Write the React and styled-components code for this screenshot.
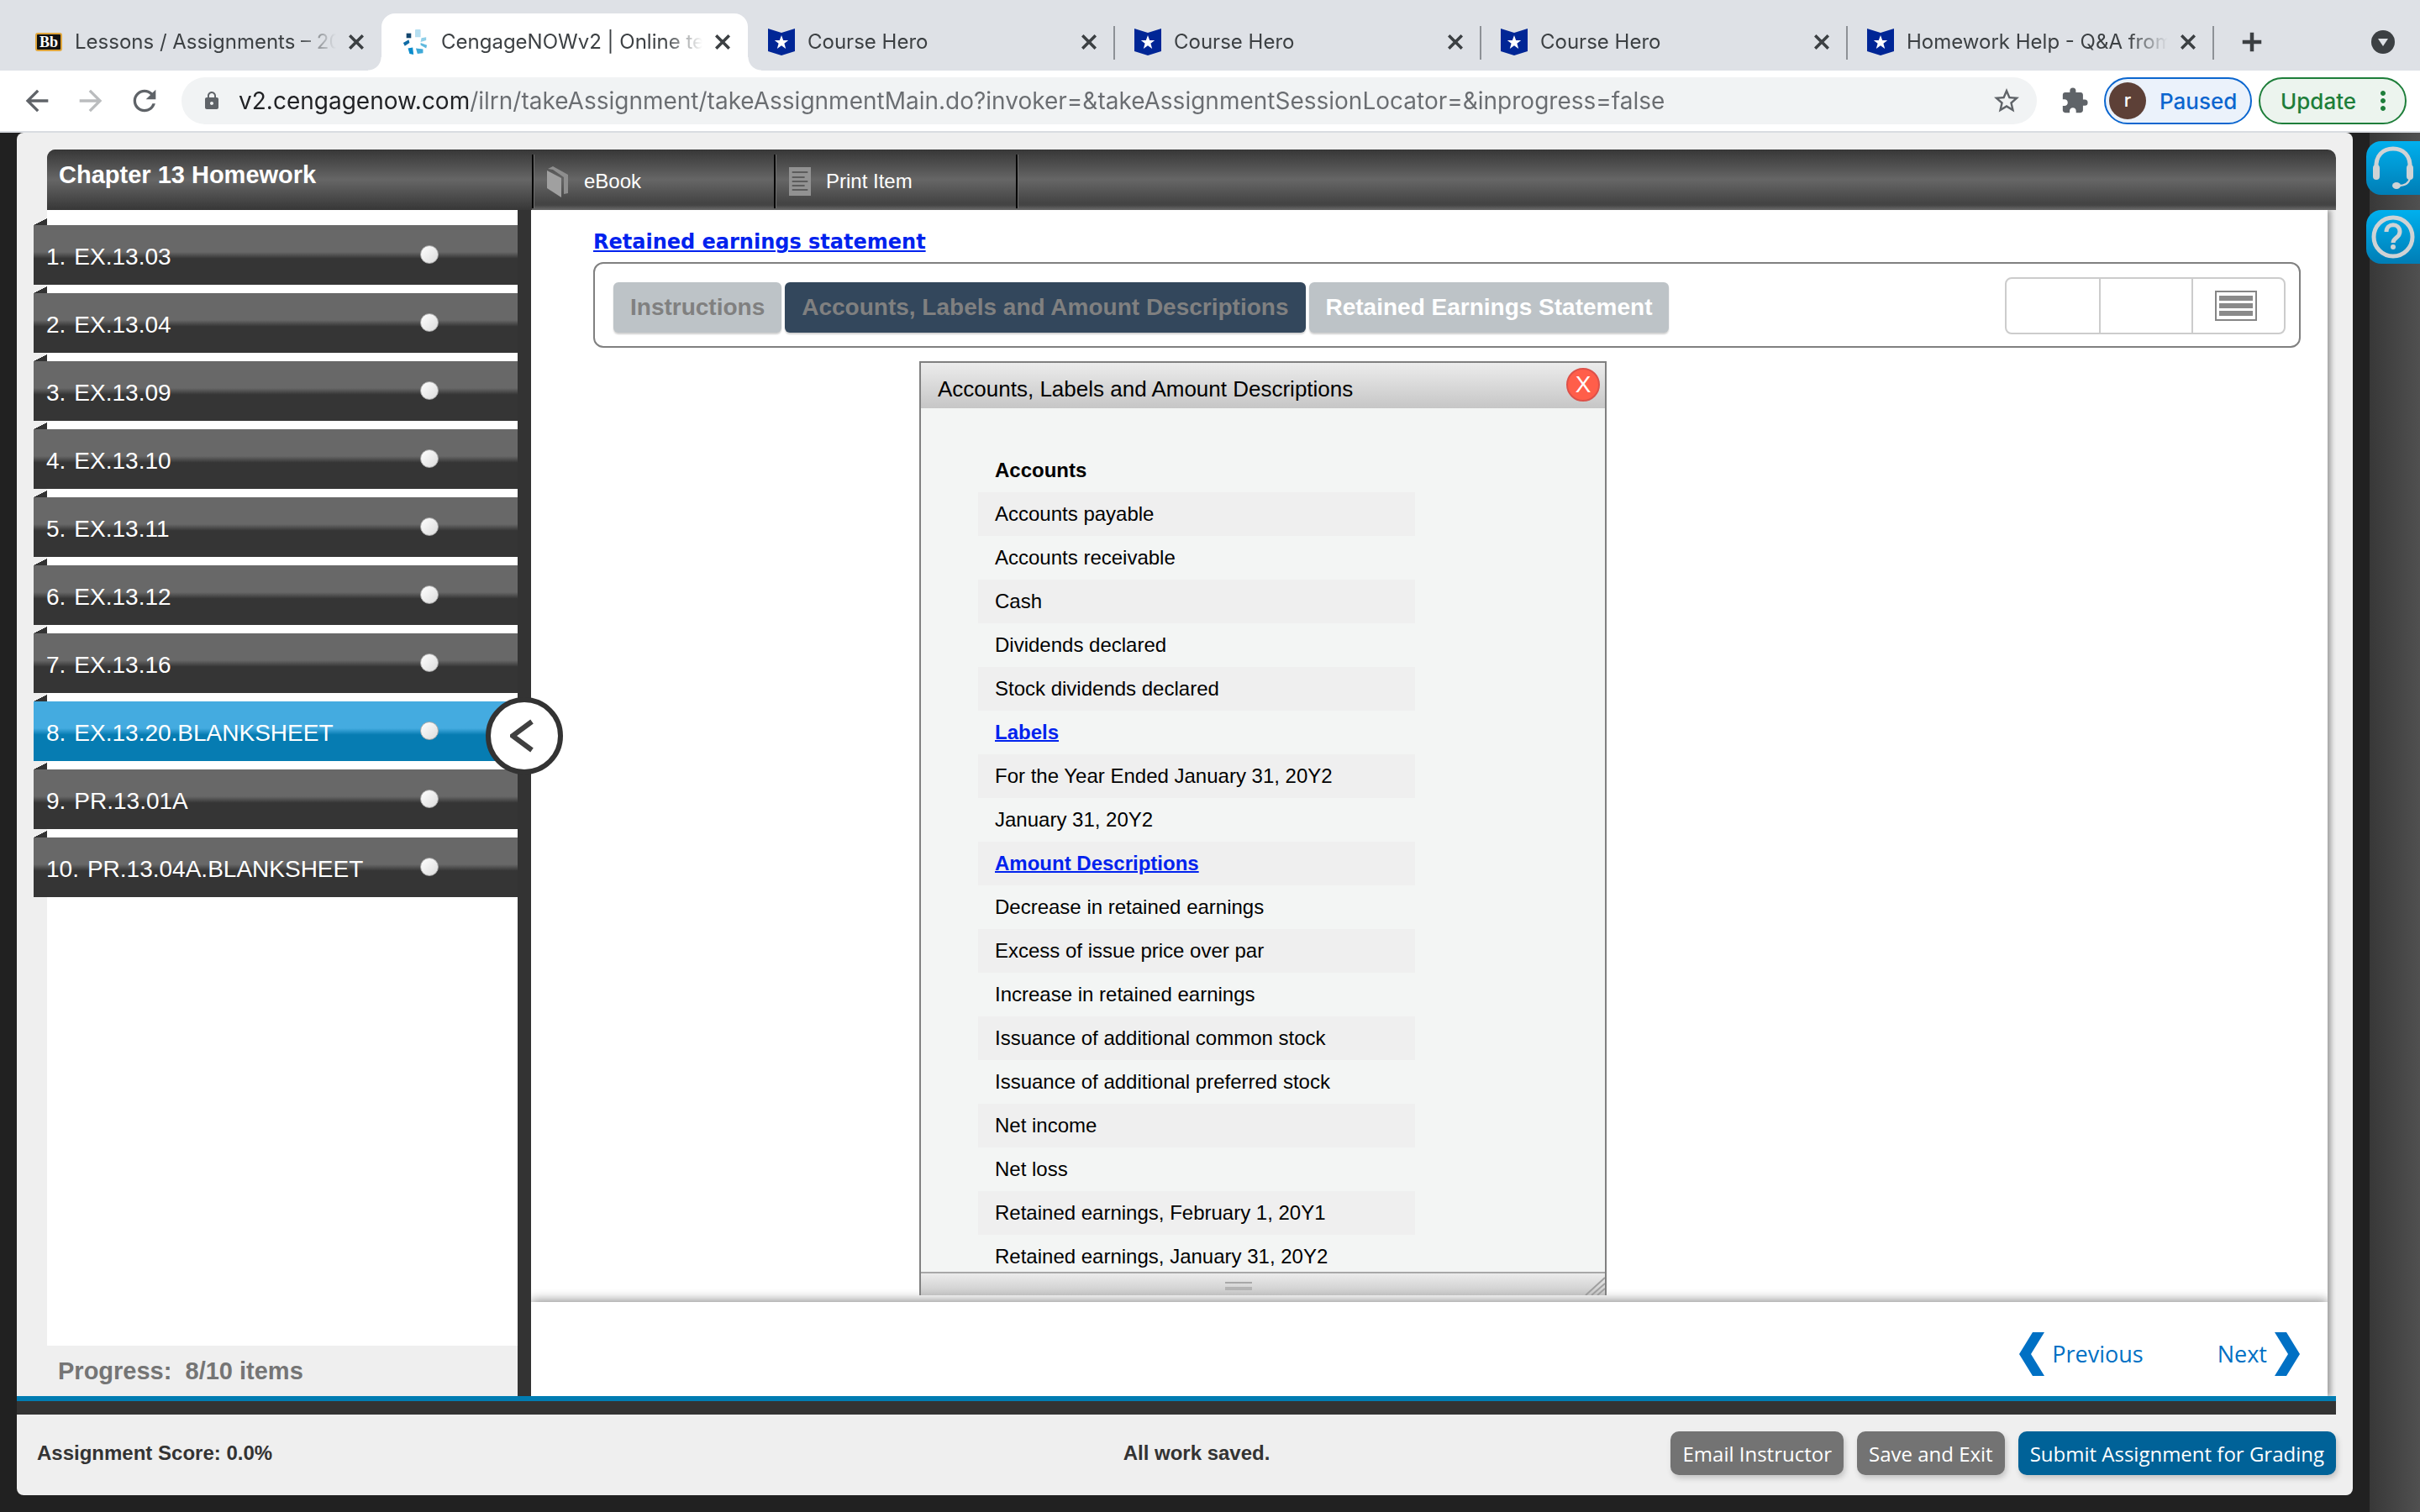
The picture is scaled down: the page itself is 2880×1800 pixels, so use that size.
import React from 'react';
import styled, { createGlobalStyle, css } from 'styled-components';
import {
    MdArrowBack,
    MdArrowForward,
    MdRefresh,
    MdLock,
    MdStarBorder,
    MdExtension,
    MdMoreVert,
    MdClose,
    MdAdd
} from 'react-icons/md';

const GlobalStyle = createGlobalStyle`
    * {
        box-sizing: border-box;
    }
    body {
        margin: 0;
        background: #212121;
        font-family: "Liberation Sans", Arial, sans-serif;
    }
    button {
        font-family: inherit;
        border: none;
        background: none;
        padding: 0;
        cursor: pointer;
    }
`;

const Page = styled.div`
    height: 100vh;
    display: flex;
    flex-direction: column;
    overflow: hidden;
`;

/* ---------- browser chrome ---------- */

const TabStrip = styled.div`
    height: 84px;
    padding: 16px 30px 0 18px;
    display: flex;
    background: #dee1e6;
    font-family: Inter, sans-serif;
    color: #3c4043;
`;
const Tab = styled.div`
    flex: 0 1 436px;
    min-width: 0;
    height: 68px;
    padding: 0 16px 0 24px;
    display: flex;
    align-items: center;
    position: relative;
    ${({ $active }) => $active && css`
        background: #ffffff;
        border-radius: 16px 16px 0 0;
        &::before,
        &::after {
            content: "";
            position: absolute;
            bottom: 0;
            width: 16px;
            height: 16px;
        }
        &::before {
            left: -16px;
            background: radial-gradient(circle at 0 0, transparent 15px, #ffffff 16px);
        }
        &::after {
            right: -16px;
            background: radial-gradient(circle at 100% 0, transparent 15px, #ffffff 16px);
        }
    `}
    ${({ $divided }) => $divided && css`
        &::after {
            content: "";
            position: absolute;
            right: -1px;
            top: 15px;
            width: 2px;
            height: 40px;
            background: #8d9196;
        }
    `}
`;
const TabLabel = styled.span`
    flex: 1;
    min-width: 0;
    margin: 0 4px 0 15px;
    overflow: hidden;
    white-space: nowrap;
    font-size: 24px;
    line-height: 32px;
    mask-image: linear-gradient(90deg, #000 calc(100% - 52px), transparent calc(100% - 6px));
`;
const TabButton = styled.button`
    display: flex;
    color: #3c4043;
    font-size: 28px;
    & path:last-child {
        stroke: currentColor;
        stroke-width: 1px;
    }
    & path[fill="none"] {
        stroke: none;
    }
`;
const NewTab = styled(TabButton)`
    font-size: 36px;
    align-items: center;
    padding: 0 28px;
`;
const TabSearch = styled(TabButton)`
    margin-left: auto;
    align-items: center;
`;
const BbIcon = styled.span`
    width: 32px;
    height: 22px;
    border: 2px solid #e0a63c;
    border-radius: 3px;
    background: #111111;
    color: #ffffff;
    font-family: "Liberation Serif", serif;
    font-size: 18px;
    line-height: 18px;
    font-weight: 700;
    text-align: center;
`;

const Toolbar = styled.div`
    height: 74px;
    padding: 0 16px 0 24px;
    display: flex;
    align-items: center;
    background: #ffffff;
    border-bottom: 2px solid #d9dce1;
    color: #5f6368;
    font-family: Inter, sans-serif;
`;
const NavButton = styled.button`
    display: flex;
    margin-right: 24px;
    font-size: 40px;
    color: ${({ disabled }) => (disabled ? '#babcbe' : '#5f6368')};
`;
const AddressBar = styled.div`
    flex: 1;
    height: 56px;
    padding: 0 18px 0 24px;
    display: flex;
    align-items: center;
    background: #f1f3f4;
    border-radius: 28px;
    font-size: 24px;
`;
const Address = styled.input`
    flex: 1;
    min-width: 0;
    height: 40px;
    margin: 0 16px 0 20px;
    padding: 0;
    border: none;
    outline: none;
    font-family: Inter, sans-serif;
    font-size: 28px;
    color: transparent;
    background: linear-gradient(90deg, #202124 274px, #6a6d71 274px);
    background-clip: text;
    -webkit-background-clip: text;
`;
const IconButton = styled.button`
    display: flex;
    font-size: 36px;
    color: #5f6368;
`;
const ExtensionButton = styled(IconButton)`
    margin: 0 18px 0 28px;
    font-size: 34px;
`;
const Pill = styled.button`
    height: 56px;
    display: flex;
    align-items: center;
    border: 2px solid ${({ $color }) => $color};
    border-radius: 28px;
    background: ${({ $fill }) => $fill};
    color: ${({ $color }) => $color};
    font-size: 26px;
    font-weight: 500;
`;
const PausedPill = styled(Pill)`
    width: 176px;
    padding-left: 4px;
    gap: 16px;
`;
const UpdatePill = styled(Pill)`
    width: 176px;
    margin-left: 8px;
    padding: 0 8px 0 24px;
    justify-content: space-between;
    & svg {
        font-size: 36px;
    }
`;
const Avatar = styled.span`
    width: 44px;
    height: 44px;
    border-radius: 50%;
    background: #5d4037;
    color: #ffffff;
    font-size: 22px;
    line-height: 42px;
    text-align: center;
`;

/* ---------- assignment shell ---------- */

const Workspace = styled.div`
    flex: 1;
    min-height: 0;
    display: flex;
    background: #212121;
`;
const Shell = styled.div`
    flex: 1;
    min-width: 0;
    margin: 0 20px 20px;
    display: flex;
    flex-direction: column;
    background: #efefef;
    border-radius: 8px;
`;
const TitleBar = styled.header`
    height: 72px;
    margin: 20px 20px 0 36px;
    display: flex;
    color: #ffffff;
    border-radius: 10px 10px 0 0;
    background: linear-gradient(180deg, #373737 0%, #666666 50%, #444444 88%, #444444 92%, #6a6a6a 100%);
`;
const Title = styled.h1`
    width: 577px;
    margin: 0;
    padding: 14px 0 0 14px;
    font-size: 29px;
    line-height: 32px;
    font-weight: 700;
    border-radius: 10px 0 0 0;
    background: linear-gradient(180deg, #373737 0%, #666666 50%, #373737 100%);
`;
const TitleButton = styled.button`
    width: 288px;
    height: 64px;
    margin-top: 6px;
    padding: 0 0 0 16px;
    display: flex;
    align-items: center;
    gap: 18px;
    border-left: 2px solid #000000;
    box-shadow: inset 1px 0 0 #707070;
    color: #ffffff;
    font-size: 24px;
`;
const TitleEnd = styled.span`
    height: 64px;
    margin-top: 6px;
    border-left: 2px solid #000000;
    border-right: 1px solid #707070;
`;

const Columns = styled.div`
    flex: 1;
    min-height: 0;
    display: flex;
    margin-right: 30px;
`;
const Sidebar = styled.nav`
    width: 612px;
    display: flex;
    flex-direction: column;
    border-right: 16px solid #333333;
    position: relative;
`;
const ItemArea = styled.div`
    flex: 1;
    margin-left: 36px;
    background: #ffffff;
`;
const ItemList = styled.ol`
    margin: 0 0 0 -16px;
    padding: 18px 0 0;
    list-style: none;
    display: flex;
    flex-direction: column;
    gap: 10px;
`;
const Item = styled.li`
    position: relative;
    &::before {
        content: "";
        position: absolute;
        left: 0;
        top: -8px;
        width: 16px;
        height: 8px;
        background: linear-gradient(to bottom right, #efefef 50%, #333333 50%);
    }
`;
const ItemButton = styled.button`
    width: 100%;
    height: 71px;
    padding: 4px 94px 0 15px;
    display: flex;
    align-items: center;
    gap: 10px;
    color: #ffffff;
    font-size: 28px;
    line-height: 32px;
    background: ${({ $current }) => ($current
        ? 'linear-gradient(180deg, #44abe0 45%, #067cb2 56%)'
        : 'linear-gradient(180deg, #686868 45%, #353535 56%)')};
`;
const StatusDot = styled.span`
    width: 22px;
    height: 22px;
    margin: 0 0 6px auto;
    border-radius: 50%;
    background: linear-gradient(135deg, #ffffff, #dcdcdc);
    border: 1px solid #a8a8a8;
`;
const Collapse = styled.button`
    position: absolute;
    right: -54px;
    top: 580px;
    z-index: 3;
    width: 92px;
    height: 92px;
    display: flex;
    align-items: center;
    justify-content: center;
    border: 6px solid #333333;
    border-radius: 50%;
    background: #ffffff;
`;
const Progress = styled.p`
    height: 60px;
    margin: 0;
    padding-left: 49px;
    color: #757575;
    font-size: 29px;
    line-height: 60px;
    font-weight: 700;
    white-space: pre;
`;

const Main = styled.main`
    flex: 1;
    min-width: 0;
    display: flex;
    flex-direction: column;
    background: #ffffff;
    box-shadow: 4px 0 6px #a0a0a0;
    clip-path: inset(0 -10px 0 0);
`;
const Content = styled.section`
    flex: 1;
    min-height: 0;
    padding: 22px 32px 8px 74px;
    display: flex;
    flex-direction: column;
    align-items: flex-start;
`;
const StatementLink = styled.a`
    color: #0022ee;
    font-family: "DejaVu Sans", Verdana, sans-serif;
    font-size: 24px;
    line-height: 32px;
    font-weight: 700;
    text-decoration-thickness: 2px;
    text-underline-offset: 2px;
`;
const SheetBar = styled.div`
    align-self: stretch;
    height: 102px;
    margin-top: 8px;
    padding: 0 16px 0 22px;
    display: flex;
    align-items: center;
    gap: 4px;
    border: 2px solid #808080;
    border-radius: 12px;
`;
const SheetButton = styled.button`
    height: 60px;
    margin-top: 6px;
    padding: 0 20px;
    border-radius: 6px;
    font-size: 28px;
    font-weight: 700;
    color: ${({ $dim }) => ($dim ? '#808080' : '#ffffff')};
    background: ${({ $current }) => ($current ? '#33475c' : '#bdc3c7')};
    box-shadow: 0 2px 2px #d0d0d0;
`;
const ViewGroup = styled.div`
    height: 68px;
    margin: 2px 0 0 auto;
    display: flex;
    border: 2px solid #cccccc;
    border-radius: 8px;
`;
const ViewButton = styled.button`
    width: 110px;
    padding-right: 6px;
    display: flex;
    align-items: center;
    justify-content: center;
    & + & {
        border-left: 2px solid #cccccc;
    }
`;

const Panel = styled.section`
    flex: 1;
    min-height: 0;
    width: 818px;
    margin: 16px 0 0 388px;
    display: flex;
    flex-direction: column;
    border: 2px solid #808080;
    border-bottom: none;
    background: #f3f5f4;
`;
const PanelHeader = styled.header`
    height: 54px;
    padding: 0 6px 0 20px;
    display: flex;
    align-items: center;
    justify-content: space-between;
    background: linear-gradient(180deg, #ececec, #c6c6c6);
`;
const PanelTitle = styled.h2`
    margin: 8px 0 0;
    font-size: 26px;
    line-height: 32px;
    font-weight: 400;
`;
const CloseButton = styled.button`
    width: 40px;
    height: 40px;
    margin-bottom: 2px;
    border: 2px solid #dd5149;
    border-radius: 50%;
    background: #ff5e4a;
    color: #ffffff;
    font-size: 28px;
    line-height: 36px;
`;
const PanelBody = styled.div`
    flex: 1;
    min-height: 0;
    overflow: hidden;
    padding: 48px 0 0 68px;
`;
const AccountList = styled.ul`
    width: 520px;
    margin: 0;
    padding: 0;
    list-style: none;
`;
const AccountRow = styled.li`
    height: 52px;
    padding-left: 20px;
    font-size: 24px;
    line-height: 52px;
    font-weight: ${({ $heading }) => ($heading ? 700 : 400)};
    &:nth-child(even) {
        background: #efefef;
    }
    & a {
        color: #0022ee;
        text-decoration-thickness: 2px;
    }
`;
const PanelFooter = styled.footer`
    height: 28px;
    display: flex;
    justify-content: flex-end;
    border-top: 2px solid #a8a8a8;
    background: linear-gradient(180deg, #ececec, #c9c9c9);
`;
const Grip = styled.span`
    width: 32px;
    height: 10px;
    margin: 10px auto 0 362px;
    border-top: 2px solid #a8a8a8;
    border-bottom: 4px solid #b4b4b4;
`;

const Pager = styled.nav`
    height: 112px;
    padding: 12px 33px 0;
    display: flex;
    align-items: center;
    justify-content: flex-end;
    gap: 88px;
    background: #ffffff;
    box-shadow: 0 -2px 12px #8c8c8c;
    clip-path: inset(-16px 0 0 0);
    z-index: 1;
`;
const PagerLink = styled.a`
    display: flex;
    align-items: center;
    gap: 9px;
    color: #0070c4;
    font-family: "Open Sans", sans-serif;
    font-size: 27px;
    line-height: 40px;
    text-decoration: none;
`;

const BaseRule = styled.div`
    height: 22px;
    margin-right: 20px;
    background: #333333;
    border-top: 6px solid #007cb2;
`;
const StatusBar = styled.footer`
    height: 96px;
    padding: 0 20px 0 24px;
    display: grid;
    grid-template-columns: 1fr auto 1fr;
    align-items: center;
    color: #333333;
    font-size: 24px;
    line-height: 28px;
    font-weight: 700;
`;
const Score = styled.span`
    margin-bottom: 4px;
`;
const SaveState = styled(Score)`
    padding-left: 24px;
`;
const Actions = styled.div`
    display: flex;
    justify-content: flex-end;
    gap: 16px;
`;
const ActionButton = styled.button`
    height: 52px;
    margin-bottom: 4px;
    padding: 0 14px;
    border-radius: 10px;
    background: ${({ $primary }) => ($primary ? '#006298' : '#737373')};
    box-shadow: 2px 4px 6px #c4c4c4;
    color: #ffffff;
    font-family: "Open Sans", sans-serif;
    font-size: 24px;
    white-space: nowrap;
`;

const SideRail = styled.aside`
    width: 60px;
    padding-top: 10px;
    display: flex;
    flex-direction: column;
    align-items: flex-end;
    gap: 18px;
    background: linear-gradient(90deg, #383838, #505050);
`;
const HelpButton = styled.button`
    width: 64px;
    height: 64px;
    display: flex;
    align-items: center;
    justify-content: center;
    border-radius: 18px 0 0 18px;
    background: linear-gradient(180deg, #00b0ee, #007db5);
`;

/* ---------- icons ---------- */

const CengageIcon = () => (
    <svg width="32" height="34" viewBox="0 0 34 34">
        <rect x="17" y="1" width="7" height="10" rx="1" fill="#b5def0" />
        <path d="M25 12l6-1v4l-7 2z" fill="#8fcfe8" />
        <path d="M24 18l8 3-1 4-7-4z" fill="#5fb9de" />
        <path d="M18 25l9 1v5l-7 1z" fill="#3ea9d8" />
        <path d="M8 25l6-1 1 9-5-1z" fill="#0a8ccc" />
        <path d="M2 18l7-4 1 4-6 4z" fill="#0f6ba5" />
        <rect x="6" y="6" width="6" height="6" fill="#12466e" />
    </svg>
);

const HeroIcon = () => (
    <svg width="32" height="32" viewBox="0 0 32 32">
        <path d="M0 0l16 5L32 0v27l-16 5L0 27z" fill="#002696" />
        <path d="M16 8l2.200 6h6l-4.800 3.700 1.800 6.300-5.200-3.800-5.200 3.800 1.800-6.300L7.800 14h6z" fill="#fff" />
    </svg>
);

const TabSearchIcon = () => (
    <svg width="28" height="28" viewBox="0 0 28 28">
        <circle cx="14" cy="14" r="14" fill="#3c4043" />
        <polygon points="8,10 20,10 14,19" fill="#dee1e6" />
    </svg>
);

const BookIcon = () => (
    <svg width="26" height="38" viewBox="0 0 26 38">
        <path d="M0 6L17 15v23L0 27z" fill="#a0a0a0" />
        <path d="M1 4L7 1l18 10v22l-5 1V14L7 5z" fill="#8e8e8e" />
    </svg>
);

const PrintIcon = () => (
    <svg width="26" height="34" viewBox="0 0 28 34" preserveAspectRatio="none">
        <rect width="28" height="34" fill="#929292" />
        <path d="M4 6h20M4 12h16M4 17h20M4 22h16M4 27h20" stroke="#5c5c5c" strokeWidth="2" />
    </svg>
);

const ListIcon = () => (
    <svg width="50" height="36" viewBox="0 0 50 36">
        <rect x="1" y="1" width="48" height="34" fill="#fff" stroke="#858585" strokeWidth="2" />
        <path d="M5 9h40M5 18h40M5 27h40" stroke="#8a8a8a" strokeWidth="6" />
    </svg>
);

const ResizeIcon = () => (
    <svg width="24" height="26" viewBox="0 0 24 26">
        <path d="M1 26L24 5M8 26L24 12M15 26L24 18" stroke="#a0a0a0" strokeWidth="2" fill="none" />
    </svg>
);

const CollapseIcon = () => (
    <svg width="34" height="40" viewBox="0 0 34 40">
        <path d="M26 3L3 20l23 17" stroke="#404040" strokeWidth="6" fill="none" />
    </svg>
);

const PreviousIcon = () => (
    <svg width="30" height="52" viewBox="0 0 30 52">
        <path d="M30 0H16L0 26l16 26h14L14 26z" fill="#0070c4" />
    </svg>
);

const NextIcon = () => (
    <svg width="30" height="52" viewBox="0 0 30 52">
        <path d="M0 0h14l16 26-16 26H0l16-26z" fill="#0070c4" />
    </svg>
);

const HeadsetIcon = () => (
    <svg width="50" height="52" viewBox="0 0 50 52">
        <path d="M5 26C4 11 13 3 25 3s21 8 20 23" stroke="#cfd3d5" strokeWidth="5" fill="none" />
        <rect x="1" y="22" width="8" height="18" rx="4" fill="#cfd3d5" />
        <rect x="41" y="22" width="8" height="18" rx="4" fill="#cfd3d5" />
        <path d="M45 38c-1 6-6 9-14 9" stroke="#cfd3d5" strokeWidth="2" fill="none" />
        <ellipse cx="29" cy="47" rx="5" ry="4" fill="#cfd3d5" />
    </svg>
);

const QuestionIcon = () => (
    <svg width="52" height="52" viewBox="0 0 52 52" fill="none">
        <circle cx="26" cy="26" r="23" stroke="#cfd3d5" strokeWidth="5" />
        <path d="M18 20c0-11 16-11 16 0 0 7-8 7-8 13" stroke="#cfd3d5" strokeWidth="5" />
        <circle cx="26" cy="38" r="3" fill="#cfd3d5" />
    </svg>
);

/* ---------- data ---------- */

const tabs = [
    { label: 'Lessons / Assignments – 20', icon: <BbIcon>Bb</BbIcon> },
    { label: 'CengageNOWv2 | Online te', icon: <CengageIcon />, active: true },
    { label: 'Course Hero', icon: <HeroIcon />, divided: true },
    { label: 'Course Hero', icon: <HeroIcon />, divided: true },
    { label: 'Course Hero', icon: <HeroIcon />, divided: true },
    { label: 'Homework Help - Q&A from', icon: <HeroIcon />, divided: true }
];

const items = [
    'EX.13.03',
    'EX.13.04',
    'EX.13.09',
    'EX.13.10',
    'EX.13.11',
    'EX.13.12',
    'EX.13.16',
    'EX.13.20.BLANKSHEET',
    'PR.13.01A',
    'PR.13.04A.BLANKSHEET'
];

const accounts = [
    { text: 'Accounts', heading: true },
    { text: 'Accounts payable' },
    { text: 'Accounts receivable' },
    { text: 'Cash' },
    { text: 'Dividends declared' },
    { text: 'Stock dividends declared' },
    { text: 'Labels', heading: true, link: true },
    { text: 'For the Year Ended January 31, 20Y2' },
    { text: 'January 31, 20Y2' },
    { text: 'Amount Descriptions', heading: true, link: true },
    { text: 'Decrease in retained earnings' },
    { text: 'Excess of issue price over par' },
    { text: 'Increase in retained earnings' },
    { text: 'Issuance of additional common stock' },
    { text: 'Issuance of additional preferred stock' },
    { text: 'Net income' },
    { text: 'Net loss' },
    { text: 'Retained earnings, February 1, 20Y1' },
    { text: 'Retained earnings, January 31, 20Y2' }
];

const url = 'v2.cengagenow.com/ilrn/takeAssignment/takeAssignmentMain.do?invoker=&takeAssignmentSessionLocator=&inprogress=false';

const Browser = () => (
    <>
        <TabStrip>
            {tabs.map((tab, i) => (
                <Tab key={i} $active={tab.active} $divided={tab.divided}>
                    {tab.icon}
                    <TabLabel>{tab.label}</TabLabel>
                    <TabButton aria-label="Close tab"><MdClose /></TabButton>
                </Tab>
            ))}
            <NewTab aria-label="New tab"><MdAdd /></NewTab>
            <TabSearch aria-label="Search tabs"><TabSearchIcon /></TabSearch>
        </TabStrip>
        <Toolbar>
            <NavButton aria-label="Back"><MdArrowBack /></NavButton>
            <NavButton aria-label="Forward" disabled><MdArrowForward /></NavButton>
            <NavButton aria-label="Reload"><MdRefresh /></NavButton>
            <AddressBar>
                <MdLock />
                <Address aria-label="Address" defaultValue={url} spellCheck={false} />
                <IconButton aria-label="Bookmark"><MdStarBorder /></IconButton>
            </AddressBar>
            <ExtensionButton aria-label="Extensions"><MdExtension /></ExtensionButton>
            <PausedPill $color="#0b66cf" $fill="#ebf2fb">
                <Avatar>r</Avatar>
                Paused
            </PausedPill>
            <UpdatePill $color="#1e7e3a" $fill="#ecf4ee">
                Update
                <MdMoreVert />
            </UpdatePill>
        </Toolbar>
    </>
);

const Items = () => (
    <Sidebar>
        <ItemArea>
            <ItemList>
                {items.map((item, i) => (
                    <Item key={item}>
                        <ItemButton $current={i === 7}>
                            <span>{i + 1}.</span>
                            <span>{item}</span>
                            <StatusDot />
                        </ItemButton>
                    </Item>
                ))}
            </ItemList>
        </ItemArea>
        <Progress>Progress:  8/10 items</Progress>
        <Collapse aria-label="Collapse item list"><CollapseIcon /></Collapse>
    </Sidebar>
);

const AccountsPanel = () => (
    <Panel>
        <PanelHeader>
            <PanelTitle>Accounts, Labels and Amount Descriptions</PanelTitle>
            <CloseButton aria-label="Close">X</CloseButton>
        </PanelHeader>
        <PanelBody>
            <AccountList>
                {accounts.map(({ text, heading, link }) => (
                    <AccountRow key={text} $heading={heading}>
                        {link ? <a href="#top">{text}</a> : text}
                    </AccountRow>
                ))}
            </AccountList>
        </PanelBody>
        <PanelFooter>
            <Grip />
            <ResizeIcon />
        </PanelFooter>
    </Panel>
);

const App = () => {
    return (
        <Page>
            <GlobalStyle />
            <Browser />
            <Workspace>
                <Shell>
                    <TitleBar>
                        <Title>Chapter 13 Homework</Title>
                        <TitleButton><BookIcon />eBook</TitleButton>
                        <TitleButton><PrintIcon />Print Item</TitleButton>
                        <TitleEnd />
                    </TitleBar>
                    <Columns>
                        <Items />
                        <Main>
                            <Content>
                                <StatementLink href="#top">Retained earnings statement</StatementLink>
                                <SheetBar>
                                    <SheetButton $dim>Instructions</SheetButton>
                                    <SheetButton $dim $current>Accounts, Labels and Amount Descriptions</SheetButton>
                                    <SheetButton>Retained Earnings Statement</SheetButton>
                                    <ViewGroup>
                                        <ViewButton aria-label="Left view" />
                                        <ViewButton aria-label="Right view" />
                                        <ViewButton aria-label="Stacked view"><ListIcon /></ViewButton>
                                    </ViewGroup>
                                </SheetBar>
                                <AccountsPanel />
                            </Content>
                            <Pager>
                                <PagerLink href="#previous"><PreviousIcon />Previous</PagerLink>
                                <PagerLink href="#next">Next<NextIcon /></PagerLink>
                            </Pager>
                        </Main>
                    </Columns>
                    <BaseRule />
                    <StatusBar>
                        <Score>Assignment Score: 0.0%</Score>
                        <SaveState>All work saved.</SaveState>
                        <Actions>
                            <ActionButton>Email Instructor</ActionButton>
                            <ActionButton>Save and Exit</ActionButton>
                            <ActionButton $primary>Submit Assignment for Grading</ActionButton>
                        </Actions>
                    </StatusBar>
                </Shell>
                <SideRail>
                    <HelpButton aria-label="Support"><HeadsetIcon /></HelpButton>
                    <HelpButton aria-label="Help"><QuestionIcon /></HelpButton>
                </SideRail>
            </Workspace>
        </Page>
    );
};

export default App;
